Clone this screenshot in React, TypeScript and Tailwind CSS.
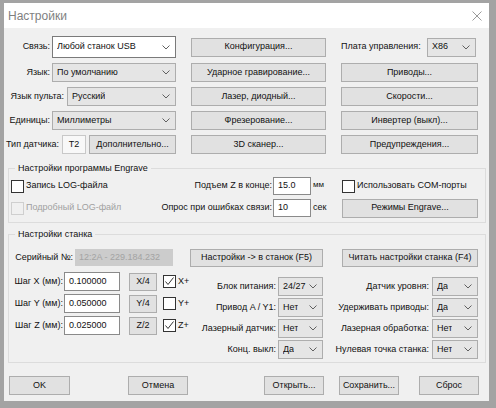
import type { ReactNode } from "react";

function Chevron() {
  return (
    <svg width="8" height="5" viewBox="0 0 8 5" className="shrink-0">
      <polyline points="0.5,0.5 4,4 7.5,0.5" fill="none" stroke="#606060" strokeWidth="1" />
    </svg>
  );
}

function Combo({ value, white = false, className = "" }: { value: string; white?: boolean; className?: string }) {
  return (
    <div
      className={`flex shrink-0 items-center justify-between border pl-[4px] pr-[5px] ${
        white ? "border-[#7a7a7a] bg-white" : "border-[#adadad] bg-[#e5e5e5]"
      } ${className}`}
    >
      <span className="overflow-hidden whitespace-nowrap">{value}</span>
      <Chevron />
    </div>
  );
}

function Btn({ children, className = "" }: { children: ReactNode; className?: string }) {
  return (
    <div
      className={`flex shrink-0 items-center justify-center whitespace-nowrap border border-[#adadad] bg-[#e1e1e1] ${className}`}
    >
      {children}
    </div>
  );
}

function Field({ value, className = "" }: { value: string; className?: string }) {
  return (
    <div className={`flex shrink-0 items-center border border-[#8a8a8a] bg-white pl-[4px] ${className}`}>
      {value}
    </div>
  );
}

function Check({ checked = false, disabled = false }: { checked?: boolean; disabled?: boolean }) {
  return (
    <div
      className={`flex h-[13px] w-[13px] shrink-0 items-center justify-center border ${
        disabled ? "border-[#cfcfcf] bg-[#f0f0f0]" : "border-[#333333] bg-white"
      }`}
    >
      {checked && (
        <svg width="11" height="11" viewBox="0 0 11 11">
          <polyline points="1.5,5.5 4,8.5 9.5,1.5" fill="none" stroke="#333333" strokeWidth="1" />
        </svg>
      )}
    </div>
  );
}

function Group({ title, children, className = "" }: { title: string; children: ReactNode; className?: string }) {
  return (
    <fieldset className={`border border-[#dcdcdc] ${className}`}>
      <legend className="ml-[6px] px-[3px] leading-[10px]">{title}</legend>
      {children}
    </fieldset>
  );
}

function LabelCombo({ label, value, width, gap }: { label: string; value: string; width: string; gap: string }) {
  return (
    <div className={`flex h-[19px] items-center justify-end ${gap}`}>
      <span className="whitespace-nowrap">{label}</span>
      <Combo value={value} className={`h-[19px] ${width}`} />
    </div>
  );
}

function StepRow({ axis, value, div, checked }: { axis: string; value: string; div: string; checked: boolean }) {
  return (
    <div className="flex h-[19px] items-center">
      <span className="w-[54px] whitespace-nowrap text-right">Шаг {axis} (мм):</span>
      <Field value={value} className="ml-[1px] h-[19px] w-[56px]" />
      <Btn className="ml-[9px] h-[18px] w-[28px]">{div}</Btn>
      <div className="ml-[6px]">
        <Check checked={checked} />
      </div>
      <span className="ml-[2px]">{axis}+</span>
    </div>
  );
}

export default function App() {
  return (
    <div className="h-[408px] w-[496px] bg-[#a3a3a3] pl-[4px] pt-[3px] font-['Liberation_Sans',Arial,sans-serif] text-[9px] text-[#111111]">
      <div className="flex h-[398px] w-[485px] flex-col bg-[#f0f0f0]">
        {/* title bar */}
        <div className="flex h-[25px] shrink-0 items-center justify-between bg-white pl-[4px] pr-[7px]">
          <span className="text-[12px] text-[#7f7f7f]">Настройки</span>
          <svg width="10" height="10" viewBox="0 0 10 10">
            <path d="M0.5 0.5 L9.5 9.5 M9.5 0.5 L0.5 9.5" stroke="#9a9a9a" strokeWidth="1" />
          </svg>
        </div>

        {/* top block */}
        <div className="mt-[8px] grid grid-cols-[170px_135px_137px] grid-rows-[22px_19px_19px_19px_19px] items-center gap-x-[15px] gap-y-[5px] pl-[2px]">
          <div className="flex items-center justify-end gap-[2px]">
            <span>Связь:</span>
            <Combo value="Любой станок USB" white className="h-[22px] w-[124px]" />
          </div>
          <Btn className="h-[19px]">Конфигурация...</Btn>
          <div className="flex items-center justify-between pr-[2px]">
            <span className="whitespace-nowrap">Плата управления:</span>
            <Combo value="X86" className="h-[19px] w-[49px]" />
          </div>

          <div className="flex items-center justify-end gap-[2px]">
            <span>Язык:</span>
            <Combo value="По умолчанию" className="h-[19px] w-[124px]" />
          </div>
          <Btn className="h-[19px]">Ударное гравирование...</Btn>
          <Btn className="h-[19px]">Приводы...</Btn>

          <div className="flex items-center justify-end gap-[3px]">
            <span className="whitespace-nowrap">Язык пульта:</span>
            <Combo value="Русский" className="h-[19px] w-[109px]" />
          </div>
          <Btn className="h-[19px]">Лазер, диодный...</Btn>
          <Btn className="h-[19px]">Скорости...</Btn>

          <div className="flex items-center justify-end gap-[2px]">
            <span>Единицы:</span>
            <Combo value="Миллиметры" className="h-[19px] w-[124px]" />
          </div>
          <Btn className="h-[19px]">Фрезерование...</Btn>
          <Btn className="h-[19px]">Инвертер (выкл)...</Btn>

          <div className="flex items-center justify-end">
            <span className="whitespace-nowrap">Тип датчика:</span>
            <div className="ml-[3px] flex h-[19px] w-[24px] items-center justify-center border border-[#c8c8c8] bg-[#f8f8f8]">
              T2
            </div>
            <Btn className="ml-[3px] h-[19px] w-[87px]">Дополнительно...</Btn>
          </div>
          <Btn className="h-[19px]">3D сканер...</Btn>
          <Btn className="h-[19px]">Предупреждения...</Btn>
        </div>

        {/* Engrave group */}
        <Group title="Настройки программы Engrave" className="ml-[4px] mt-[9px] w-[478px]">
          <div className="grid grid-cols-[139px_192px_136px] grid-rows-[18px_18px] items-center gap-y-[4px] pb-[5px] pl-[2px] pt-[4px]">
            <div className="flex items-center gap-[2px]">
              <Check />
              <span>Запись LOG-файла</span>
            </div>
            <div className="flex items-center justify-end pr-[12px]">
              <span className="whitespace-nowrap">Подъем Z в конце:</span>
              <Field value="15.0" className="ml-[1px] h-[18px] w-[38px]" />
              <span className="mb-[3px] ml-[2px] w-[17px] text-[8px]">мм</span>
            </div>
            <div className="flex items-center gap-[2px]">
              <Check />
              <span className="w-[111px] overflow-hidden whitespace-nowrap">Использовать COM-порты</span>
            </div>

            <div className="flex items-center gap-[2px]">
              <Check disabled />
              <span className="text-[#a0a0a0]">Подробный LOG-файл</span>
            </div>
            <div className="flex items-center justify-end pr-[12px]">
              <span className="whitespace-nowrap">Опрос при ошибках связи:</span>
              <Field value="10" className="ml-[1px] h-[18px] w-[38px]" />
              <span className="ml-[2px] w-[17px]">сек</span>
            </div>
            <Btn className="h-[19px]">Режимы Engrave...</Btn>
          </div>
        </Group>

        {/* machine group */}
        <Group title="Настройки станка" className="ml-[4px] mt-[6px] w-[478px]">
          <div className="flex flex-col pb-[3px] pt-[10px]">
            <div className="flex h-[17px] items-center">
              <span className="w-[64px] whitespace-nowrap text-right">Серийный №:</span>
              <div className="ml-[2px] flex h-[17px] w-[98px] items-center bg-[#cccccc] pl-[4px] text-[#a3a3a3]">
                12:2A - 229.184.232
              </div>
              <Btn className="ml-[17px] h-[18px] w-[133px]">Настройки -&gt; в станок (F5)</Btn>
              <Btn className="ml-[19px] h-[18px] w-[136px]">Читать настройки станка (F4)</Btn>
            </div>

            <div className="flex">
              <div className="flex w-[186px] flex-col gap-[3px] pt-[6px]">
                <StepRow axis="X" value="0.100000" div="X/4" checked />
                <StepRow axis="Y" value="0.050000" div="Y/4" checked={false} />
                <StepRow axis="Z" value="0.025000" div="Z/2" checked />
              </div>
              <div className="flex w-[128px] flex-col gap-[2px] pt-[11px]">
                <LabelCombo label="Блок питания:" value="24/27" width="w-[45px]" gap="gap-[2px]" />
                <LabelCombo label="Привод A / Y1:" value="Нет" width="w-[45px]" gap="gap-[2px]" />
                <LabelCombo label="Лазерный датчик:" value="Нет" width="w-[45px]" gap="gap-[2px]" />
                <LabelCombo label="Конц. выкл:" value="Да" width="w-[45px]" gap="gap-[2px]" />
              </div>
              <div className="ml-[9px] flex w-[146px] flex-col gap-[2px] pt-[11px]">
                <LabelCombo label="Датчик уровня:" value="Да" width="w-[46px]" gap="gap-[3px]" />
                <LabelCombo label="Удерживать приводы:" value="Да" width="w-[46px]" gap="gap-[3px]" />
                <LabelCombo label="Лазерная обработка:" value="Нет" width="w-[46px]" gap="gap-[3px]" />
                <LabelCombo label="Нулевая точка станка:" value="Нет" width="w-[46px]" gap="gap-[3px]" />
              </div>
            </div>
          </div>
        </Group>

        {/* bottom buttons */}
        <div className="ml-[5px] mt-[13px] flex h-[19px] items-center">
          <Btn className="h-[19px] w-[61px]">OK</Btn>
          <Btn className="ml-[58px] h-[19px] w-[60px]">Отмена</Btn>
          <Btn className="ml-[76px] h-[19px] w-[60px]">Открыть...</Btn>
          <Btn className="ml-[15px] h-[19px] w-[60px]">Сохранить...</Btn>
          <Btn className="ml-[20px] h-[19px] w-[60px]">Сброс</Btn>
        </div>
      </div>
    </div>
  );
}
